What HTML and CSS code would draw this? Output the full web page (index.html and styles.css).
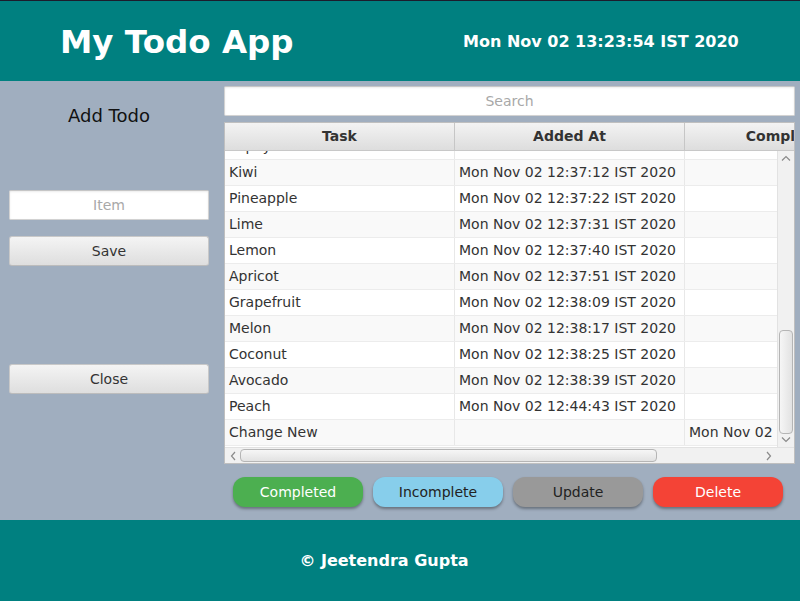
FILE: index.html
```html
<!DOCTYPE html>
<html>
<head>
<meta charset="utf-8">
<link rel="stylesheet" href="styles.css">
</head>
<body>
<div class="app">
  <header class="header">
    <div class="title">My Todo App</div>
    <div class="clock">Mon Nov 02 13:23:54 IST 2020</div>
  </header>
  <main class="main">
    <section class="left">
      <div class="add-label">Add Todo</div>
      <div class="field item-field">Item</div>
      <div class="btn save-btn">Save</div>
      <div class="btn close-btn">Close</div>
    </section>
    <section class="right">
      <div class="field search">Search</div>
      <div class="table">
        <div class="thead">
          <div class="th">Task</div>
          <div class="th">Added At</div>
          <div class="th">Completed At</div>
        </div>
        <div class="tbody-wrap">
          <div class="viewport">
            <div class="rows">
              <div class="tr"><div class="td">Papaya</div><div class="td">Mon Nov 02 12:37:03 IST 2020</div><div class="td"></div></div>
              <div class="tr alt"><div class="td">Kiwi</div><div class="td">Mon Nov 02 12:37:12 IST 2020</div><div class="td"></div></div>
              <div class="tr"><div class="td">Pineapple</div><div class="td">Mon Nov 02 12:37:22 IST 2020</div><div class="td"></div></div>
              <div class="tr alt"><div class="td">Lime</div><div class="td">Mon Nov 02 12:37:31 IST 2020</div><div class="td"></div></div>
              <div class="tr"><div class="td">Lemon</div><div class="td">Mon Nov 02 12:37:40 IST 2020</div><div class="td"></div></div>
              <div class="tr alt"><div class="td">Apricot</div><div class="td">Mon Nov 02 12:37:51 IST 2020</div><div class="td"></div></div>
              <div class="tr"><div class="td">Grapefruit</div><div class="td">Mon Nov 02 12:38:09 IST 2020</div><div class="td"></div></div>
              <div class="tr alt"><div class="td">Melon</div><div class="td">Mon Nov 02 12:38:17 IST 2020</div><div class="td"></div></div>
              <div class="tr"><div class="td">Coconut</div><div class="td">Mon Nov 02 12:38:25 IST 2020</div><div class="td"></div></div>
              <div class="tr alt"><div class="td">Avocado</div><div class="td">Mon Nov 02 12:38:39 IST 2020</div><div class="td"></div></div>
              <div class="tr"><div class="td">Peach</div><div class="td">Mon Nov 02 12:44:43 IST 2020</div><div class="td"></div></div>
              <div class="tr alt"><div class="td">Change New</div><div class="td"></div><div class="td">Mon Nov 02 13:23:40 IST 2020</div></div>
            </div>
          </div>
          <div class="vscroll">
            <svg class="arrow" width="10" height="6" viewBox="0 0 10 6"><path d="M1 5.5 L5 1.5 L9 5.5" fill="none" stroke="#8a8a8a" stroke-width="1.2"/></svg>
            <div class="vtrack"><div class="vthumb"></div></div>
            <svg class="arrow" width="10" height="6" viewBox="0 0 10 6"><path d="M1 0.5 L5 4.5 L9 0.5" fill="none" stroke="#8a8a8a" stroke-width="1.2"/></svg>
          </div>
        </div>
        <div class="hscroll-row">
          <div class="hscroll">
            <svg class="harrow" width="6" height="10" viewBox="0 0 6 10"><path d="M5 1 L1.5 5 L5 9" fill="none" stroke="#8a8a8a" stroke-width="1.2"/></svg>
            <div class="htrack"><div class="hthumb"></div></div>
            <svg class="harrow" width="6" height="10" viewBox="0 0 6 10"><path d="M1 1 L4.5 5 L1 9" fill="none" stroke="#8a8a8a" stroke-width="1.2"/></svg>
          </div>
          <div class="corner"></div>
        </div>
      </div>
      <div class="actions">
        <div class="abtn completed">Completed</div>
        <div class="abtn incomplete">Incomplete</div>
        <div class="abtn update">Update</div>
        <div class="abtn delete">Delete</div>
      </div>
    </section>
  </main>
  <footer class="footer">© Jeetendra Gupta</footer>
</div>
</body>
</html>
```
FILE: styles.css
```css
* { box-sizing: border-box; }
html, body { margin: 0; padding: 0; }
body {
  font-family: "DejaVu Sans", "Liberation Sans", sans-serif;
  color: #333;
  background: #a0aebf;
  width: 800px;
  height: 601px;
  overflow: hidden;
}
.app { display: flex; flex-direction: column; height: 601px; }

.header {
  height: 81px;
  background: #008080;
  border-top: 1px solid #1c1c2c;
  display: grid;
  grid-template-columns: 463px 1fr;
  align-items: center;
  color: #fff;
  font-weight: bold;
}
.title { padding-left: 60px; font-size: 32.5px; line-height: 40px; padding-top: 2px; }
.clock { font-size: 16px; line-height: 20px; padding-top: 1px; }

.main {
  height: 439px;
  display: flex;
  padding: 5px 0 0 9px;
}

.left { width: 200px; margin-right: 15px; display: flex; flex-direction: column; }
.add-label {
  font-size: 18px;
  color: #111;
  text-align: center;
  margin-top: 19px;
  line-height: 22px;
}
.field {
  height: 30px;
  background: #fff;
  border: 1px solid #d2d2d2;
  border-top-color: #c6c6c6;
  border-radius: 2px;
  box-shadow: inset 0 1px 2px rgba(0,0,0,0.08);
  color: #a8a8a8;
  font-size: 14px;
  text-align: center;
  line-height: 28px;
}
.item-field { margin-top: 63px; }
.btn {
  height: 30px;
  border: 1px solid #c8c8c8;
  border-bottom-color: #bcbcbc;
  border-radius: 3px;
  background: linear-gradient(#f4f4f4, #dedede);
  color: #333;
  font-size: 14px;
  text-align: center;
  line-height: 28px;
}
.save-btn { margin-top: 16px; }
.close-btn { margin-top: 98px; }

.right { width: 571px; display: flex; flex-direction: column; }
.search { width: 571px; }

.table {
  margin-top: 6px;
  height: 342px;
  border: 1px solid #bfbfbf;
  background: #fff;
  display: flex;
  flex-direction: column;
  overflow: hidden;
}
.thead {
  height: 28px;
  display: flex;
  overflow: hidden;
  flex: none;
  background: linear-gradient(#f3f3f3, #dddddd);
  border-bottom: 1px solid #c8c8c8;
}
.th {
  flex: none;
  width: 230px;
  border-right: 1px solid #c6c6c6;
  font-weight: bold;
  font-size: 14px;
  text-align: center;
  line-height: 27px;
  color: #333;
  white-space: nowrap;
}
.tbody-wrap { flex: 1; display: flex; min-height: 0; }
.viewport { flex: 1; overflow: hidden; position: relative; }
.rows { margin-top: -17px; }
.tr {
  display: flex;
  height: 26px;
  border-bottom: 1px solid #ececec;
  background: #fff;
}
.tr.alt { background: #f9f9f9; }
.td {
  flex: none;
  width: 230px;
  border-right: 1px solid #e8e8e8;
  padding-left: 4px;
  font-size: 14px;
  line-height: 25px;
  color: #333;
  white-space: nowrap;
  overflow: hidden;
}

.vscroll {
  width: 17px;
  flex: none;
  background: #f1f1f1;
  border-left: 1px solid #e2e2e2;
  display: flex;
  flex-direction: column;
  align-items: center;
}
.arrow { flex: none; margin: 4px 0; }
.vtrack { flex: 1; width: 100%; position: relative; }
.vthumb {
  position: absolute;
  left: 1px;
  right: 1px;
  top: 165px;
  height: 104px;
  border: 1px solid #b5b5b5;
  border-radius: 4px;
  background: linear-gradient(90deg, #f6f6f6, #e2e2e2);
}
.hscroll-row { height: 16px; flex: none; display: flex; border-top: 1px solid #e2e2e2; }
.hscroll {
  flex: 1;
  background: #f1f1f1;
  display: flex;
  align-items: center;
  padding: 0 5px;
}
.harrow { flex: none; }
.htrack { flex: 1; height: 100%; position: relative; margin: 0 4px; }
.hthumb {
  position: absolute;
  left: 0;
  top: 1px;
  bottom: 1px;
  width: 417px;
  border: 1px solid #b5b5b5;
  border-radius: 4px;
  background: linear-gradient(#f6f6f6, #e2e2e2);
}
.corner { width: 17px; flex: none; background: #f1f1f1; }

.actions {
  margin-top: 13px;
  display: flex;
  gap: 10px;
  padding-left: 9px;
}
.abtn {
  width: 130px;
  height: 30px;
  border-radius: 12px;
  font-size: 14px;
  line-height: 30px;
  text-align: center;
  box-shadow: 0 2px 3px rgba(0,0,0,0.35);
}
.completed { background: #4caf50; color: #fff; }
.incomplete { background: #87ceeb; color: #222; }
.update { background: #999999; color: #222; }
.delete { background: #f44336; color: #fff; }

.footer {
  height: 81px;
  background: #008080;
  color: #fff;
  font-weight: bold;
  font-size: 16px;
  display: flex;
  align-items: center;
  justify-content: center;
  padding-right: 32px;
}
```
